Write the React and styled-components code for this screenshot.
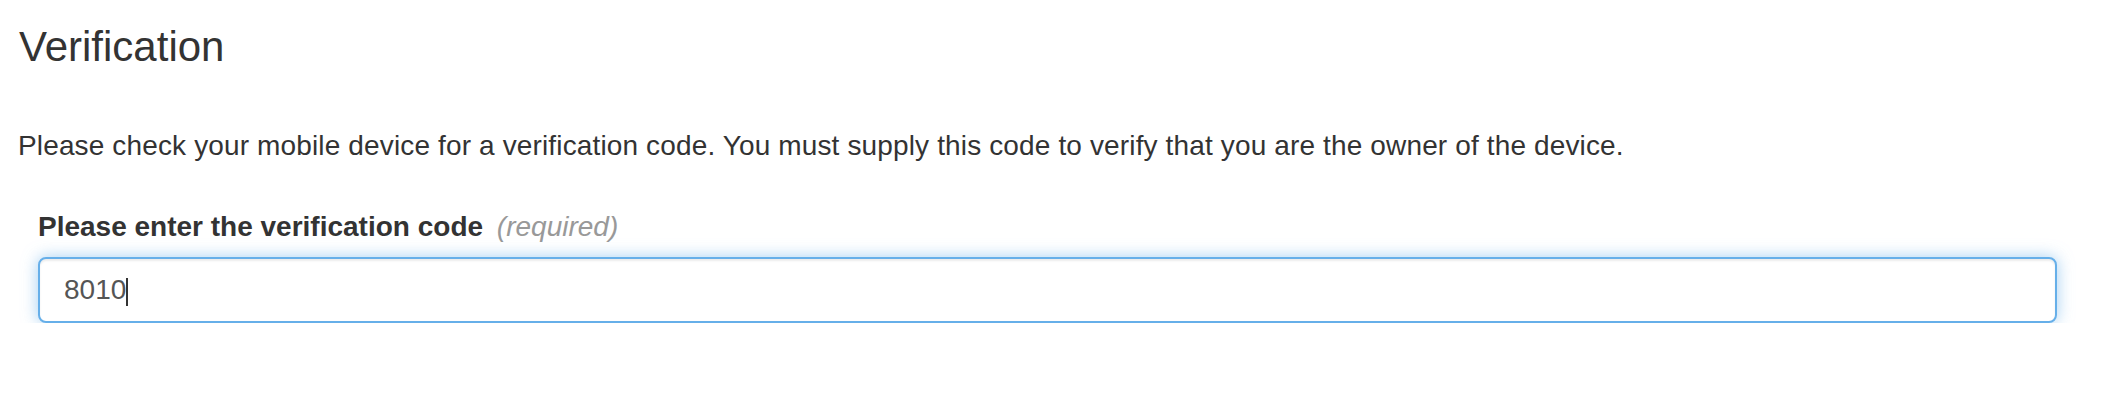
import React from "react";
import styled, { createGlobalStyle } from "styled-components";

const Global = createGlobalStyle`
  html, body { margin: 0; padding: 0; background: #fff; }
  body { font-family: "Liberation Sans", Arial, sans-serif; color: #333; }
  * { box-sizing: border-box; }
`;

const Page = styled.div`
  display: flex;
  flex-direction: column;
  padding: 24px 57px 0 15px;
`;

const Heading = styled.h3`
  margin: 0 0 56px 4px;
  font-size: 42px;
  line-height: 1.1;
  font-weight: 400;
  color: #333;
`;

const Intro = styled.p`
  margin: 0 0 41px 3px;
  font-size: 28px;
  line-height: 40px;
  letter-spacing: 0.14px;
  color: #333;
`;

const FormGroup = styled.div`
  display: flex;
  flex-direction: column;
  align-items: flex-start;
  padding-left: 23px;
`;

const Label = styled.label`
  font-size: 28px;
  line-height: 40px;
  font-weight: 700;
  color: #333;
  margin-bottom: 10px;
`;

const Required = styled.span`
  font-weight: 400;
  font-style: italic;
  color: #999;
  margin-left: 6px;
`;

const Field = styled.div`
  position: relative;
  width: 100%;
`;

const Input = styled.input`
  display: block;
  width: 100%;
  height: 66px;
  padding: 0 24px;
  font-family: "Liberation Sans", Arial, sans-serif;
  font-size: 28px;
  color: #555;
  background: #fff;
  border: 2px solid #66afe9;
  border-radius: 8px;
  outline: none;
  box-shadow: inset 0 2px 2px rgba(0, 0, 0, 0.075), 0 0 16px rgba(102, 175, 233, 0.6);
  caret-color: transparent;
`;

const Caret = styled.span`
  position: absolute;
  left: ${(p) => p.$left}px;
  top: 21px;
  width: 2px;
  height: 28px;
  background: #333;
  pointer-events: none;
`;

export default function App() {
  return (
    <>
      <Global />
      <Page>
        <Heading>Verification</Heading>
        <Intro>
          Please check your mobile device for a verification code. You must supply this code to verify that you are the owner of the device.
        </Intro>
        <FormGroup>
          <Label htmlFor="code">
            Please enter the verification code <Required>(required)</Required>
          </Label>
          <Field>
            <Input id="code" type="text" defaultValue="8010" />
            <Caret $left={88} />
          </Field>
        </FormGroup>
      </Page>
    </>
  );
}
